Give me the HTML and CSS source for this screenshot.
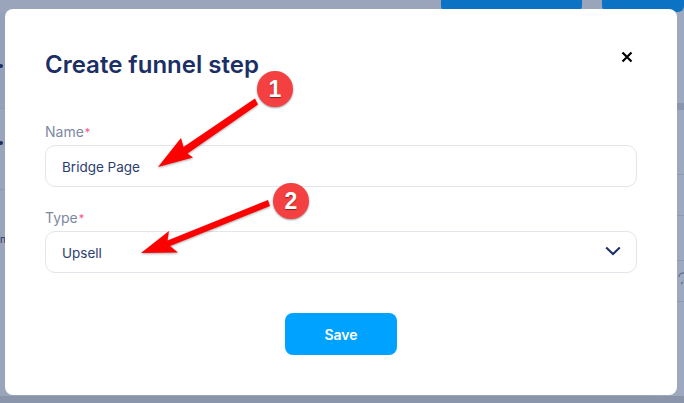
FILE: index.html
```html
<!doctype html>
<html lang="en">
  <head>
    <meta charset="UTF-8" />
    <meta name="viewport" content="width=device-width, initial-scale=1.0" />
    <title>Create funnel step</title>
    <link rel="stylesheet" href="styles.css">
  </head>
  <body>
    <!-- page behind the dialog, only its edges show -->
    <div class="page">
      <div class="topbar">
        <span class="top-btn wide"></span>
        <span class="top-btn narrow"></span>
      </div>
      <div class="table">
        <div class="col-left">
          <div class="row first"><i class="dot"></i></div>
          <div class="row second"><i class="dot"></i></div>
          <div class="row third"><span class="cut-text">n</span></div>
        </div>
        <div class="col-right">
          <div class="strip"></div>
          <div class="cell c1"></div>
          <div class="cell c2"></div>
          <div class="cell c3"></div>
          <div class="cell c4">
            <svg class="cut-icon" width="12" height="14" viewBox="0 0 12 14">
              <path d="M1 5a4 4 0 0 1 8 0c0 2-2 3-3 4M3 12l2-2" stroke="#6b7893" stroke-width="1.500" fill="none" />
            </svg>
          </div>
        </div>
      </div>
      <div class="foot"></div>
    </div>

    <div class="modal">
      <div class="modal-head">
        <h2>Create funnel step</h2>
        <svg class="close" width="12" height="12" viewBox="0 0 12 12">
          <path d="M1.500 1.500l9 9M10.500 1.500l-9 9" stroke="#000" stroke-width="2.200" fill="none" />
        </svg>
      </div>
      <label class="label">Name<span class="req">*</span></label>
      <div class="input">Bridge Page</div>
      <label class="label">Type<span class="req">*</span></label>
      <div class="input select">
        <span>Upsell</span>
        <svg width="16" height="10" viewBox="0 0 16 10">
          <path d="M1.200 1.500L8 8l6.800-6.500" stroke="#1b2f66" stroke-width="2" fill="none" />
        </svg>
      </div>
      <div class="actions">
        <button>Save</button>
      </div>
    </div>

    <!-- annotations drawn on top of the screenshot -->
    <svg class="arrows" width="684" height="403" viewBox="0 0 684 403">
      <polygon points="158,167 181,138 183.500,147 255,98.500 258,104.500 187.500,153.500 193,157.500" />
      <polygon points="141,253 169,231 167.500,240.500 268,200 270,206 170,246 178,252.500" />
    </svg>
    <span class="badge one">1</span>
    <span class="badge two">2</span>
  </body>
</html>
```

FILE: styles.css
```css
* {
    box-sizing: border-box;
}

html, body {
    margin: 0;
    padding: 0;
    height: 100%;
    overflow: hidden;
}

body {
    font-family: Inter, "Liberation Sans", sans-serif;
    background-color: #9aa5bc;
    color: #1b2f66;
}

.page {
    height: 403px;
    display: flex;
    flex-direction: column;
}

.topbar {
    height: 12px;
    flex-shrink: 0;
    display: flex;
    justify-content: flex-end;
    gap: 20px;
}

.top-btn {
    display: block;
    height: 100%;
    background-color: #0b72c4;
    border-radius: 0 0 6px 6px;
}

.top-btn.wide {
    width: 141px;
}

.top-btn.narrow {
    width: 82px;
}

.table {
    flex: 1;
    display: flex;
    justify-content: space-between;
}

.col-left {
    width: 120px;
}

.row {
    border-bottom: 1px solid #8f9ab1;
}

.row.first {
    height: 97px;
    padding-top: 52px;
    background-color: #95a1bb;
}

.row.second {
    height: 81px;
    padding-top: 32px;
}

.row.third {
    height: 120px;
    padding-top: 42px;
    border-bottom: none;
}

.dot {
    display: block;
    width: 4px;
    height: 4px;
    margin-left: -1px;
    border-radius: 50%;
    background-color: #1c3068;
}

.cut-text {
    display: block;
    font-size: 10px;
    line-height: 14px;
    color: #1c3068;
}

.col-right {
    width: 30px;
    background-color: #9ea8be;
}

.strip {
    margin-top: 91px;
    height: 7px;
    background-color: #8a95b0;
}

.cell {
    border-bottom: 1px solid #8f9ab1;
}

.c1 {
    height: 65px;
}

.c2 {
    height: 41px;
}

.c3 {
    height: 45px;
}

.c4 {
    height: 41px;
    padding-top: 11px;
    overflow: hidden;
}

.cut-icon {
    display: block;
    margin-left: 24px;
}

.foot {
    height: 7px;
    flex-shrink: 0;
    background-color: #8a95ab;
}

.modal {
    position: absolute;
    left: 5px;
    top: 9px;
    width: 672px;
    height: 386px;
    padding: 41px 40px 40px;
    background-color: #fff;
    border-radius: 8px;
}

.modal-head {
    display: flex;
    justify-content: space-between;
    align-items: center;
    height: 30px;
    margin-bottom: 42px;
}

h2 {
    margin: 0;
    font-size: 24px;
    line-height: 30px;
    font-weight: 600;
    color: #1b2f66;
}

.close {
    margin-right: 4px;
    margin-top: -16px;
}

.label {
    display: block;
    font-size: 14px;
    line-height: 20px;
    color: #7c88a2;
    margin-bottom: 3px;
}

.req {
    color: #f7567c;
    font-size: 11px;
    margin-left: 1px;
    vertical-align: 1px;
}

.input {
    height: 42px;
    width: 592px;
    padding: 1px 15px 0 16px;
    display: flex;
    align-items: center;
    justify-content: space-between;
    border: 1px solid #e3e5ea;
    border-radius: 10px;
    font-size: 13.500px;
    color: #2c3d70;
    margin-bottom: 21px;
}

.input.select svg {
    margin-top: -3px;
}

.actions {
    display: flex;
    justify-content: center;
    margin-top: 40px;
}

button {
    width: 112px;
    height: 42px;
    border: none;
    border-radius: 8px;
    background-color: #00a2ff;
    color: white;
    font-family: inherit;
    font-size: 14px;
    font-weight: 600;
    cursor: pointer;
}

.arrows {
    position: absolute;
    left: 0;
    top: 0;
    fill: #fe0000;
    filter: drop-shadow(0 1px 1px rgba(0, 0, 0, 0.35));
}

.badge {
    position: absolute;
    width: 36px;
    height: 36px;
    border-radius: 50%;
    background-color: #f44040;
    box-shadow: 0 1px 2px rgba(0, 0, 0, 0.4);
    color: #fff;
    font-family: "Liberation Sans", Arial, sans-serif;
    font-size: 23px;
    font-weight: 700;
    line-height: 36px;
    text-align: center;
    text-shadow: 0 1px 1px rgba(0, 0, 0, 0.45);
}

.badge.one {
    left: 257px;
    top: 71px;
}

.badge.two {
    left: 273px;
    top: 183px;
}
```
